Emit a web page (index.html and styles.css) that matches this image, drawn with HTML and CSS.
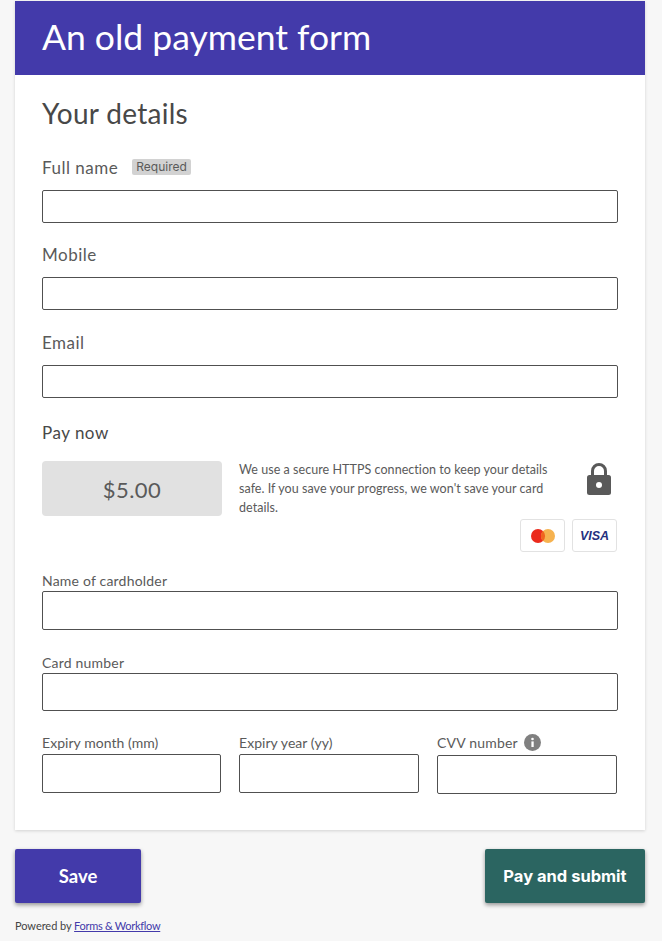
FILE: index.html
```html
<!DOCTYPE html>
<html lang="en">
<head>
    <meta charset="UTF-8">
    <meta name="viewport" content="width=device-width, initial-scale=1.0">
    <title>An old payment form</title>
    <link rel="stylesheet" href="styles.css">
</head>
<body>
    <div class="card">
        <h1 class="card-title">An old payment form</h1>
        <form class="card-body">
            <h2 class="section-title">Your details</h2>

            <div class="field field-name">
                <label class="field-label">Full name <span class="required">Required</span></label>
                <input class="text-input" type="text">
            </div>
            <div class="field field-mobile">
                <label class="field-label">Mobile</label>
                <input class="text-input" type="text">
            </div>
            <div class="field field-email">
                <label class="field-label">Email</label>
                <input class="text-input" type="text">
            </div>

            <h3 class="pay-title">Pay now</h3>
            <div class="pay-row">
                <div class="amount">$5.00</div>
                <div class="secure">
                    <div class="secure-top">
                        <p class="secure-text">We use a secure HTTPS connection to keep your details safe. If you save your progress, we won't save your card details.</p>
                        <svg class="lock" viewBox="0 0 26 34" width="26" height="34">
                            <path d="M6.5 14V9a6.5 6.5 0 0 1 13 0v5" fill="none" stroke="#595959" stroke-width="3"/>
                            <rect x="1" y="13" width="24" height="20" rx="2.5" fill="#595959"/>
                            <circle cx="13" cy="23" r="3" fill="#fff"/>
                        </svg>
                    </div>
                    <div class="card-logos">
                        <span class="logo">
                            <svg viewBox="0 0 24 14" width="24" height="14">
                                <circle cx="7" cy="7" r="7" fill="#eb2a1c"/>
                                <circle cx="17" cy="7" r="7" fill="#f6b24f"/>
                                <path d="M12 2a7 7 0 0 1 0 10a7 7 0 0 1 0-10z" fill="#f0641f"/>
                            </svg>
                        </span>
                        <span class="logo"><span class="visa">VISA</span></span>
                    </div>
                </div>
            </div>

            <div class="field-small field-holder">
                <label class="small-label">Name of cardholder</label>
                <input class="text-input tall" type="text">
            </div>
            <div class="field-small field-number">
                <label class="small-label">Card number</label>
                <input class="text-input number-input" type="text">
            </div>
            <div class="expiry-row">
                <div class="expiry-col">
                    <label class="small-label">Expiry month (mm)</label>
                    <input class="text-input tall" type="text">
                </div>
                <div class="expiry-col">
                    <label class="small-label">Expiry year (yy)</label>
                    <input class="text-input tall" type="text">
                </div>
                <div class="expiry-col">
                    <label class="small-label cvv-label">CVV number
                        <svg class="info" viewBox="0 0 17 17" width="17" height="17">
                            <circle cx="8.5" cy="8.5" r="8.5" fill="#808080"/>
                            <rect x="7.4" y="7.4" width="2.3" height="5.6" fill="#fff"/>
                            <circle cx="8.5" cy="5" r="1.3" fill="#fff"/>
                        </svg>
                    </label>
                    <input class="text-input tall" type="text">
                </div>
            </div>
        </form>
    </div>

    <div class="actions">
        <button class="btn btn-save" type="button">Save</button>
        <button class="btn btn-pay" type="button">Pay and submit</button>
    </div>

    <p class="powered">Powered by <a href="#">Forms &amp; Workflow</a></p>
</body>
</html>
```

FILE: styles.css
```css
* {
    box-sizing: border-box;
}
body {
    margin: 0;
    padding: 1px 17px 0 15px;
    font-family: "Lato", Arial, sans-serif;
    background-color: #f7f7f7;
    color: #505050;
}
.card {
    background-color: white;
    box-shadow: 0 1px 3px rgba(0,0,0,0.15);
    height: 829px;
}
.card-title {
    margin: 0;
    height: 74px;
    padding: 0 27px;
    background-color: #433aaa;
    color: white;
    font-size: 35.5px;
    font-weight: 400;
    line-height: 72px;
}
.card-body {
    padding: 0 27px;
}
.section-title {
    margin: 0;
    padding-top: 21px;
    font-size: 28px;
    font-weight: 400;
    line-height: 34px;
    color: #484848;
    letter-spacing: 0.3px;
}
.field-name {
    margin-top: 25px;
}
.field-mobile {
    margin-top: 19px;
}
.field-email {
    margin-top: 20px;
}
.field-label {
    display: flex;
    align-items: center;
    height: 24px;
    margin-bottom: 11px;
    font-size: 17px;
    letter-spacing: 0.5px;
    color: #5a5a5a;
}
.required {
    margin-left: 14px;
    padding: 0 4px;
    height: 16px;
    line-height: 16px;
    background-color: #d2d2d2;
    border-radius: 2px;
    font-family: "Inter", Arial, sans-serif;
    font-size: 12px;
    letter-spacing: 0;
}
.text-input {
    display: block;
    width: 100%;
    height: 33px;
    border: 1px solid #505050;
    border-radius: 2px;
    background-color: white;
}
.tall {
    height: 39px;
}
.number-input {
    height: 38px;
}
.pay-title {
    margin: 23px 0 0;
    font-size: 17px;
    font-weight: 400;
    line-height: 24px;
    letter-spacing: 0.5px;
    color: #484848;
}
.pay-row {
    display: flex;
    gap: 17px;
    margin-top: 16px;
}
.amount {
    flex: none;
    width: 180px;
    height: 55px;
    background-color: #e1e1e1;
    border-radius: 4px;
    text-align: center;
    font-size: 22px;
    line-height: 57px;
    letter-spacing: 0.5px;
    color: #5a5a5a;
}
.secure {
    flex: 1;
    min-width: 0;
}
.secure-top {
    display: flex;
    justify-content: space-between;
    height: 58px;
}
.secure-text {
    width: 318px;
    margin: -1px 0 0;
    font-size: 12.5px;
    line-height: 19px;
    letter-spacing: 0.05px;
    color: #5a5a5a;
}
.lock {
    margin: 1px 6px 0 0;
}
.card-logos {
    display: flex;
    justify-content: flex-end;
    gap: 7px;
    padding-right: 1px;
}
.logo {
    display: flex;
    align-items: center;
    justify-content: center;
    width: 45px;
    height: 33px;
    border: 1px solid #e2e2e2;
    border-radius: 3px;
    background-color: white;
}
.visa {
    font-family: "Liberation Sans", Arial, sans-serif;
    font-size: 12.5px;
    font-weight: 700;
    font-style: italic;
    color: #25307f;
}
.field-holder {
    margin-top: 20px;
}
.field-number {
    margin-top: 24px;
}
.small-label {
    display: block;
    height: 19px;
    font-size: 14px;
    line-height: 17px;
    letter-spacing: 0.2px;
    color: #5a5a5a;
}
.expiry-row {
    display: grid;
    grid-template-columns: 179px 180px 180px;
    column-gap: 18px;
    margin-top: 23px;
}
.expiry-col .small-label {
    margin-bottom: 1px;
    letter-spacing: 0.05px;
}
.expiry-col .cvv-label {
    display: flex;
    align-items: flex-start;
    gap: 6px;
    height: 20px;
    letter-spacing: 0.2px;
}
.actions {
    display: flex;
    justify-content: space-between;
    margin-top: 19px;
}
.btn {
    height: 54px;
    border: none;
    border-radius: 2px;
    color: white;
    font-weight: 700;
    box-shadow: 0 2px 4px rgba(0,0,0,0.4);
}
.btn-save {
    width: 126px;
    background-color: #433aaa;
    font-family: "Lato", Arial, sans-serif;
    font-size: 18.5px;
}
.btn-pay {
    width: 160px;
    background-color: #2b6561;
    font-family: "Inter", Arial, sans-serif;
    font-size: 16.5px;
}
.powered {
    margin: 16px 0 0;
    font-size: 11px;
    line-height: 14px;
    letter-spacing: -0.05px;
    color: #444;
}
.powered a {
    color: #433aaa;
    letter-spacing: -0.3px;
}
```
